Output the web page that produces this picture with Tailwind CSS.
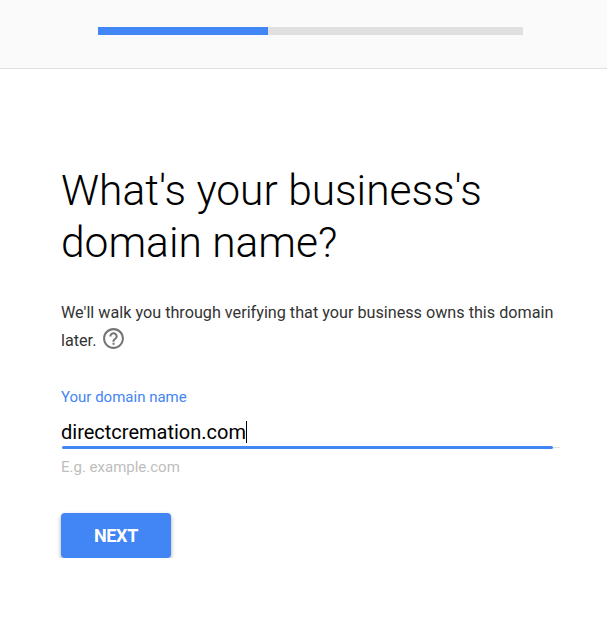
<!DOCTYPE html>
<html lang="en">
<head>
    <meta charset="UTF-8">
    <title>Domain name</title>
    <script src="https://cdn.jsdelivr.net/npm/@tailwindcss/browser@4"></script>
</head>
<body class="bg-white font-['Roboto',sans-serif] overflow-hidden">
    <div class="h-[69px] bg-[#fafafa] border-b border-[#e0e0e0] pt-[27px] pl-[98px]">
        <div class="w-[425px] h-2 bg-[#e0e0e0]">
            <div class="w-[170px] h-2 bg-[#4285f4]"></div>
        </div>
    </div>
    <div class="pl-[61px] pt-[96px]">
        <h1 class="w-[500px] text-[42.5px] leading-[52px] font-light text-black">What's your business's domain name?</h1>
        <p class="mt-[30px] w-[500px] text-[16.2px] leading-[27px] text-[#333]">We'll walk you through verifying that your business owns this domain later.
            <svg class="inline-block ml-[1px] align-[-5px] w-[25px] h-[25px]" viewBox="0 0 24 24" fill="#757575"><path d="M11 18h2v-2h-2v2zm1-16C6.48 2 2 6.48 2 12s4.48 10 10 10 10-4.48 10-10S17.52 2 12 2zm0 18c-4.41 0-8-3.59-8-8s3.59-8 8-8 8 3.59 8 8-3.59 8-8 8zm0-14c-2.21 0-4 1.79-4 4h2c0-1.1.9-2 2-2s2 .9 2 2c0 2-3 1.75-3 5h2c0-2.25 3-2.5 3-5 0-2.21-1.79-4-4-4z"/></svg>
        </p>
        <label class="block mt-[33px] text-[15px] leading-5 text-[#4285f4]">Your domain name</label>
        <div class="mt-[10px] w-[492px] h-[29px] flex items-center text-xl text-black">directcremation.com<span class="w-px h-[22px] bg-black"></span></div>
        <div class="relative w-[498px] ml-px h-[3px]">
            <div class="absolute left-0 right-0 top-px h-px bg-[#e0e0e0]"></div>
            <div class="absolute left-0 top-0 w-[491px] h-[3px] bg-[#4285f4] rounded-sm"></div>
        </div>
        <p class="mt-[8px] text-[15px] leading-5 text-[#bdbdbd]">E.g. example.com</p>
        <button class="mt-[36px] w-[110px] h-[45px] rounded bg-[#4285f4] text-white font-bold text-lg tracking-[-0.3px] shadow-[0_2px_4px_rgba(0,0,0,0.35)]">NEXT</button>
    </div>
</body>
</html>
